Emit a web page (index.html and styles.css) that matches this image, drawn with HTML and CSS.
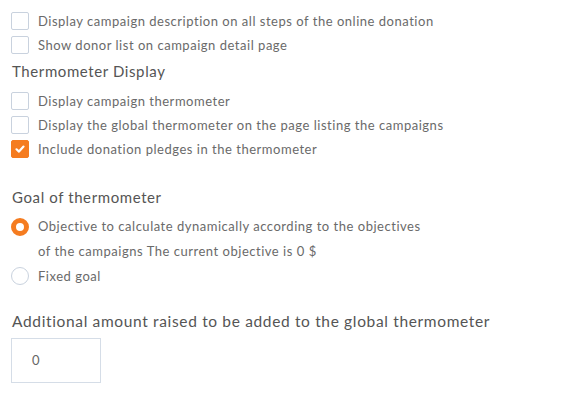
FILE: index.html
```html
<!DOCTYPE html>
<html>
<head>
<meta charset="utf-8">
<link rel="stylesheet" href="styles.css">
</head>
<body>
<div class="page">
  <div class="opts">
    <label class="opt"><span class="box"></span><span>Display campaign description on all steps of the online donation</span></label>
    <label class="opt"><span class="box"></span><span>Show donor list on campaign detail page</span></label>
  </div>
  <h3 class="heading h-thermo">Thermometer Display</h3>
  <div class="opts">
    <label class="opt"><span class="box"></span><span>Display campaign thermometer</span></label>
    <label class="opt"><span class="box"></span><span>Display the global thermometer on the page listing the campaigns</span></label>
    <label class="opt"><span class="box checked"><svg viewBox="0 0 18 18" width="18" height="18"><path d="M5.5 9.3 L8 11.6 L12.5 6.6" fill="none" stroke="#fff" stroke-width="2.2" stroke-linecap="round" stroke-linejoin="round"/></svg></span><span>Include donation pledges in the thermometer</span></label>
  </div>
  <h3 class="heading h-goal">Goal of thermometer</h3>
  <div class="opts radios">
    <label class="opt top"><span class="radio on"></span><span class="multi">Objective to calculate dynamically according to the objectives<br>of the campaigns The current objective is 0 $</span></label>
    <label class="opt"><span class="radio"></span><span>Fixed goal</span></label>
  </div>
  <h3 class="heading h-amount">Additional amount raised to be added to the global thermometer</h3>
  <div class="input">0</div>
</div>
</body>
</html>
```
FILE: styles.css
```css
html, body {
  margin: 0;
  padding: 0;
  background: #fff;
}
.page {
  font-family: Lato, "Noto Sans", sans-serif;
  color: #6a6a6a;
  font-size: 13px;
  letter-spacing: 0.52px;
  padding: 12px 11px 0 11px;
}
.opts {
  display: flex;
  flex-direction: column;
  gap: 6px;
}
.opt {
  display: flex;
  align-items: center;
  gap: 9px;
  line-height: 18px;
}
.opt.top {
  align-items: flex-start;
}
.box {
  width: 18px;
  height: 18px;
  box-sizing: border-box;
  border: 1px solid #c9d2de;
  border-radius: 2px;
  flex: none;
  background: #fff;
}
.box.checked {
  background: #f57c20;
  border-color: #f57c20;
  position: relative;
}
.box.checked svg {
  position: absolute;
  left: -1px;
  top: -1px;
}
.radio {
  width: 18px;
  height: 18px;
  box-sizing: border-box;
  border: 1px solid #c9d2de;
  border-radius: 50%;
  flex: none;
  background: #fff;
}
.radio.on {
  border: 5px solid #f57c20;
}
.multi {
  line-height: 25px;
  margin-top: -4px;
}
.heading {
  font-size: 15px;
  font-weight: normal;
  color: #555;
  margin: 0;
  line-height: 20px;
  letter-spacing: 0.6px;
}
.h-thermo {
  margin: 7px 0 11px 1px;
}
.h-goal {
  margin: 29px 0 10px 1px;
}
.h-amount {
  margin: 26px 0 7px 1px;
  font-size: 15.5px;
  letter-spacing: 0.65px;
}
.radios {
  gap: 3px;
}
.opts.radios .opt.top {
  margin-top: 1px;
}
.input {
  width: 90px;
  height: 45px;
  box-sizing: border-box;
  border: 1px solid #d5dde7;
  padding-left: 20px;
  line-height: 43px;
  font-size: 13px;
  color: #666;
}
```
